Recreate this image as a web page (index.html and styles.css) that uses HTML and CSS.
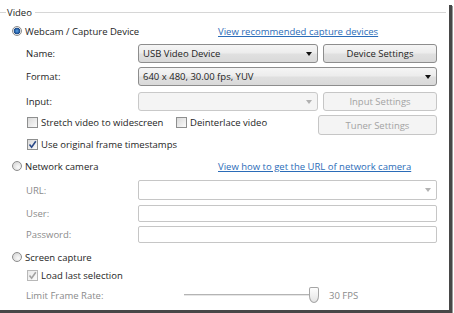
FILE: index.html
```html
<!DOCTYPE html>
<html lang="en">
<head>
    <meta charset="UTF-8">
    <title>Video Source</title>
    <link rel="stylesheet" href="styles.css">
</head>
<body>
    <div class="window">
        <div class="group-head"><span>Video</span></div>
        <div class="group-body">
            <div class="source src-webcam">
                <label class="radio-label"><span class="radio checked"></span>Webcam / Capture Device</label>
                <a href="#" class="help-link">View recommended capture devices</a>
            </div>

            <div class="field row-name">
                <span class="field-label">Name:</span>
                <div class="combo short">USB Video Device</div>
                <button class="btn">Device Settings</button>
            </div>

            <div class="field row-format">
                <span class="field-label">Format:</span>
                <div class="combo wide">640 x 480, 30.00 fps, YUV</div>
            </div>

            <div class="field row-input">
                <span class="field-label">Input:</span>
                <div class="combo short disabled"></div>
                <button class="btn" disabled>Input Settings</button>
            </div>

            <div class="checks row-stretch">
                <label class="check-label stretch"><span class="check"></span>Stretch video to widescreen</label>
                <label class="check-label"><span class="check"></span>Deinterlace video</label>
                <button class="btn tuner" disabled>Tuner Settings</button>
            </div>

            <div class="checks row-original">
                <label class="check-label">
                    <span class="check checked">
                        <svg viewBox="0 0 9 9" width="9" height="9"><path d="M1.5 4.6 L3.6 7.2 L7.8 1.2" fill="none" stroke="#2b4a88" stroke-width="1.6"/></svg>
                    </span>Use original frame timestamps
                </label>
            </div>

            <div class="source src-network">
                <label class="radio-label"><span class="radio"></span>Network camera</label>
                <a href="#" class="help-link">View how to get the URL of network camera</a>
            </div>

            <div class="field row-url">
                <span class="field-label muted">URL:</span>
                <div class="text-box url-box"></div>
            </div>

            <div class="field row-user">
                <span class="field-label muted">User:</span>
                <div class="text-box"></div>
            </div>

            <div class="field row-password">
                <span class="field-label muted">Password:</span>
                <div class="text-box"></div>
            </div>

            <div class="source src-screen">
                <label class="radio-label"><span class="radio"></span>Screen capture</label>
            </div>

            <div class="checks row-loadlast">
                <label class="check-label">
                    <span class="check checked disabled">
                        <svg viewBox="0 0 9 9" width="9" height="9"><path d="M1.5 4.6 L3.6 7.2 L7.8 1.2" fill="none" stroke="#a2a2a2" stroke-width="1.6"/></svg>
                    </span>Load last selection
                </label>
            </div>

            <div class="field row-limit">
                <span class="field-label muted">Limit Frame Rate:</span>
                <div class="slider">
                    <div class="track"></div>
                    <div class="thumb"></div>
                    <span class="slider-value muted">30 FPS</span>
                </div>
            </div>
        </div>
    </div>
</body>
</html>
```

FILE: styles.css
```css
body {
    margin: 0;
    background: #fff;
    font-family: "Open Sans", "Noto Sans", sans-serif;
    font-size: 9.5px;
    color: #1e1e1e;
}
.window {
    width: 449px;
    height: 305px;
    background: #fff;
    border-right: 3px solid #474747;
    border-bottom: 3px solid #474747;
    box-shadow: 1px 1px 0 #9a9a9a;
}
.group-head {
    display: flex;
    align-items: center;
    height: 14px;
    margin-top: 5px;
    margin-right: 3px;
}
.group-head::before {
    content: "";
    width: 6px;
    border-top: 1px solid #d6d6d6;
}
.group-head::after {
    content: "";
    flex: 1;
    border-top: 1px solid #d6d6d6;
}
.group-head span {
    padding: 0 3px 0 1px;
}
.group-body {
    padding: 0 12px;
}

/* radio rows */
.source {
    display: grid;
    grid-template-columns: 206px auto;
    align-items: center;
    height: 20px;
}
.radio-label {
    display: flex;
    align-items: center;
}
.radio {
    width: 10px;
    height: 10px;
    box-sizing: border-box;
    border-radius: 50%;
    border: 1px solid #8c8c8c;
    background: radial-gradient(circle at 65% 65%, #fafafa, #cfcfcf);
    margin-right: 3px;
}
.radio.checked {
    background: radial-gradient(circle, #5aa2e6 0, #2a64aa 2px, #1d4a86 3px, #ececec 3.6px, #f7f7f7);
}
.help-link {
    color: #2b6cb8;
    text-decoration: underline;
}
.src-webcam { margin-top: 2px; }
.src-network { margin-top: 5px; }
.src-screen { margin-top: 4px; }

/* label + control rows */
.field {
    display: flex;
    align-items: center;
    gap: 5px;
    padding-left: 14px;
}
.field-label {
    width: 107px;
    flex-shrink: 0;
}
.muted {
    color: #8b8b8b;
}
.row-name { margin-top: 3px; height: 19px; }
.row-format { margin-top: 4px; height: 19px; }
.row-input { margin-top: 6px; height: 19px; }
.row-url { margin-top: 4px; height: 20px; }
.row-user { margin-top: 5px; height: 17px; }
.row-password { margin-top: 4px; height: 17px; }
.row-limit { margin-top: 4px; height: 18px; }

.combo {
    display: flex;
    align-items: center;
    height: 19px;
    box-sizing: border-box;
    padding-left: 4px;
    border: 1px solid #8d8d8d;
    border-radius: 3px;
    background: linear-gradient(#f5f5f5, #ececec 48%, #e0e0e0 52%, #d9d9d9);
}
.combo::after {
    content: "";
    margin-left: auto;
    margin-right: 5px;
    border-left: 3px solid transparent;
    border-right: 3px solid transparent;
    border-top: 4px solid #111;
}
.combo.short { width: 180px; }
.combo.wide { flex: 1; }
.combo.disabled {
    border-color: #c9c9c9;
    background: #f4f4f4;
}
.combo.disabled::after {
    border-top-color: #b0b0b0;
}

.btn {
    flex: 1;
    height: 19px;
    padding: 0;
    font: inherit;
    color: #1e1e1e;
    border: 1px solid #8d8d8d;
    border-radius: 3px;
    background: linear-gradient(#f5f5f5, #ececec 48%, #e0e0e0 52%, #d9d9d9);
}
.btn:disabled {
    color: #a3a3a3;
    border-color: #c6c6c6;
    background: #f4f4f4;
}
.btn.tuner {
    flex: none;
    width: 119px;
    height: 20px;
    margin-left: auto;
}

.text-box {
    flex: 1;
    align-self: stretch;
    display: flex;
    align-items: center;
    border: 1px solid #c6c6c6;
    border-radius: 2px;
    background: #fff;
}
.url-box::after {
    content: "";
    margin-left: auto;
    margin-right: 5px;
    border-left: 3px solid transparent;
    border-right: 3px solid transparent;
    border-top: 4px solid #b3b3b3;
}

/* checkbox rows */
.checks {
    display: flex;
    align-items: flex-start;
    padding-left: 15px;
}
.check-label {
    display: flex;
    align-items: center;
    height: 14px;
}
.check-label.stretch {
    width: 149px;
}
.check {
    display: flex;
    align-items: center;
    justify-content: center;
    width: 11px;
    height: 11px;
    box-sizing: border-box;
    border: 1px solid #8e8f8f;
    background: linear-gradient(135deg, #d9d9d9, #fbfbfb);
    margin-right: 3px;
}
.check.disabled {
    border-color: #b8b8b8;
    background: linear-gradient(135deg, #eaeaea, #fbfbfb);
}
.row-stretch { margin-top: 4px; height: 20px; }
.row-original { margin-top: 2px; height: 14px; }
.row-loadlast { margin-top: 1px; height: 14px; }

/* frame rate slider */
.slider {
    display: flex;
    align-items: center;
    margin-left: 46px;
}
.track {
    width: 125px;
    height: 0;
    border-top: 1px solid #b4b4b4;
    border-bottom: 1px solid #e6e6e6;
}
.thumb {
    width: 10px;
    height: 16px;
    box-sizing: border-box;
    border: 1px solid #a5a5a5;
    border-radius: 2px 2px 5px 5px / 2px 2px 7px 7px;
    background: linear-gradient(#fdfdfd, #e4e4e4);
}
.slider-value {
    margin-left: 10px;
}
```
